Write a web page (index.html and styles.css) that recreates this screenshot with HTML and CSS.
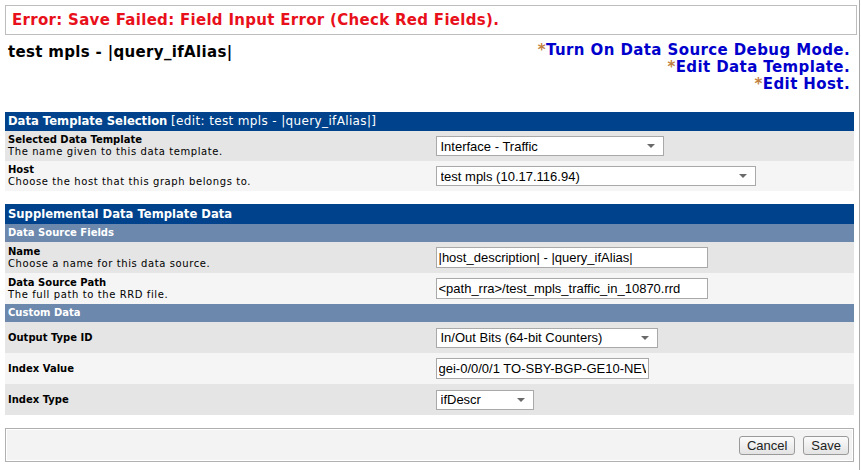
FILE: index.html
```html
<!DOCTYPE html>
<html>
<head>
<meta charset="utf-8">
<link rel="stylesheet" href="styles.css">
</head>
<body>
<div class="frame">
  <div class="error-box">Error: Save Failed: Field Input Error (Check Red Fields).</div>
  <div class="title-row">
    <div class="page-title">test mpls - |query_ifAlias|</div>
    <div class="links">
      <div><span class="star">*</span><a href="#">Turn On Data Source Debug Mode.</a></div>
      <div><span class="star">*</span><a href="#">Edit Data Template.</a></div>
      <div><span class="star">*</span><a href="#">Edit Host.</a></div>
    </div>
  </div>

  <table class="panel first">
    <tr class="hdr"><td colspan="2"><b>Data Template Selection</b> <span class="hdr-note">[edit: test mpls - |query_ifAlias|]</span></td></tr>
    <tr class="row odd">
      <td class="lbl"><b>Selected Data Template</b><br><span class="desc">The name given to this data template.</span></td>
      <td class="ctl"><span class="sel w228"><select><option>Interface - Traffic</option></select></span></td>
    </tr>
    <tr class="row even">
      <td class="lbl"><b>Host</b><br><span class="desc">Choose the host that this graph belongs to.</span></td>
      <td class="ctl"><span class="sel w320"><select><option>test mpls (10.17.116.94)</option></select></span></td>
    </tr>
  </table>

  <table class="panel second">
    <tr class="hdr"><td colspan="2"><b>Supplemental Data Template Data</b></td></tr>
    <tr class="sub"><td colspan="2">Data Source Fields</td></tr>
    <tr class="row odd">
      <td class="lbl"><b>Name</b><br><span class="desc">Choose a name for this data source.</span></td>
      <td class="ctl"><input class="txt w272" type="text" value="|host_description| - |query_ifAlias|"></td>
    </tr>
    <tr class="row even">
      <td class="lbl"><b>Data Source Path</b><br><span class="desc">The full path to the RRD file.</span></td>
      <td class="ctl"><input class="txt w272" type="text" value="&lt;path_rra&gt;/test_mpls_traffic_in_10870.rrd"></td>
    </tr>
    <tr class="sub"><td colspan="2">Custom Data</td></tr>
    <tr class="row odd">
      <td class="lbl"><b>Output Type ID</b></td>
      <td class="ctl"><span class="sel w222"><select><option>In/Out Bits (64-bit Counters)</option></select></span></td>
    </tr>
    <tr class="row even">
      <td class="lbl"><b>Index Value</b></td>
      <td class="ctl"><input class="txt w213" type="text" value="gei-0/0/0/1 TO-SBY-BGP-GE10-NEW"></td>
    </tr>
    <tr class="row odd">
      <td class="lbl"><b>Index Type</b></td>
      <td class="ctl"><span class="sel w98"><select><option>ifDescr</option></select></span></td>
    </tr>
  </table>

  <div class="actions">
    <button class="btn">Cancel</button>
    <button class="btn">Save</button>
  </div>
</div>
</body>
</html>
```

FILE: styles.css
```css
html, body {
  margin: 0;
  padding: 0;
  background: #ffffff;
}
body {
  font-family: "DejaVu Sans", Verdana, sans-serif;
  color: #000;
}
.frame {
  width: 859px;
  height: 470px;
  border-right: 1px solid #a8a8a8;
  box-sizing: content-box;
  overflow: hidden;
}
.error-box {
  margin: 5px 2px 0 5px;
  height: 28px;
  border: 1px solid #bdbdbd;
  color: #e8101a;
  font-weight: bold;
  font-size: 15px;
  letter-spacing: 0.3px;
  line-height: 28px;
  padding-left: 6px;
}
.title-row {
  display: flex;
  justify-content: space-between;
  align-items: flex-start;
  padding: 8px 9px 0 8px;
  height: 77px;
  box-sizing: border-box;
}
.page-title {
  font-size: 15px;
  font-weight: bold;
  letter-spacing: 0.33px;
  line-height: 18px;
}
.links {
  text-align: right;
  font-size: 15px;
  font-weight: bold;
  letter-spacing: 0.4px;
  line-height: 17px;
  margin-top: -1px;
}
.links a {
  color: #0000cc;
  text-decoration: none;
}
.star {
  color: #c08040;
}
.panel {
  margin-left: 5px;
  width: 849px;
  border-collapse: collapse;
  table-layout: fixed;
}
.panel td {
  padding: 0 3px;
}
.panel.second {
  margin-top: 13px;
}
.hdr td {
  background: #00438c;
  color: #fff;
  font-size: 11.6px;
  height: 19px;
  line-height: 19px;
}
.second .hdr td {
  height: 20px;
  line-height: 20px;
}
.hdr-note {
  font-size: 12px;
  letter-spacing: 0.36px;
}
.sub td {
  background: #6d88ad;
  color: #fff;
  font-size: 10px;
  font-weight: bold;
  height: 18px;
  line-height: 18px;
}
.row td {
  height: 31px;
  font-size: 10px;
  line-height: 12px;
  vertical-align: middle;
}
.first .row td { height: 30px; }
.desc { letter-spacing: 0.6px; }
.row.odd td { background: #e5e5e5; }
.row.even td { background: #f5f5f5; }
.lbl { width: 420px; }
.ctl { padding-left: 6px !important; }

.sel {
  position: relative;
  display: inline-block;
  vertical-align: middle;
}
.sel select {
  appearance: none;
  -webkit-appearance: none;
  width: 100%;
  height: 20px;
  border: 1px solid #a9a9a9;
  background: #fff;
  font-family: "Liberation Sans", Arial, sans-serif;
  font-size: 13px;
  padding: 0 0 0 4px;
  color: #000;
  border-radius: 0;
}
.sel::after {
  content: "";
  position: absolute;
  right: 9px;
  top: 8px;
  border-left: 4px solid transparent;
  border-right: 4px solid transparent;
  border-top: 4px solid #6a6a6a;
}
.w228 { width: 228px; }
.w320 { width: 320px; }
.w222 { width: 222px; }
.w98 { width: 98px; }

.txt {
  height: 21px;
  box-sizing: border-box;
  border: 1px solid #a9a9a9;
  font-family: "Liberation Sans", Arial, sans-serif;
  font-size: 13px;
  padding: 0 2px;
  margin: 0;
  vertical-align: middle;
  color: #000;
}
.w272 { width: 272px; }
.w213 { width: 213px; }

.actions {
  margin: 13px 0 0 5px;
  width: 849px;
  height: 34px;
  box-sizing: border-box;
  border: 1px solid #b0b0b0;
  box-shadow: inset 0 0 0 1px #fff;
  background: #f3f3f3;
  display: flex;
  justify-content: flex-end;
  align-items: center;
  gap: 8px;
  padding-right: 4px;
}
.btn {
  font-family: "Liberation Sans", Arial, sans-serif;
  font-size: 13px;
  height: 19px;
  padding: 0 7px;
  border: 1px solid #9a9a9a;
  border-radius: 3px;
  background: linear-gradient(#fbfbfb, #e3e3e3);
  color: #222;
}
```
